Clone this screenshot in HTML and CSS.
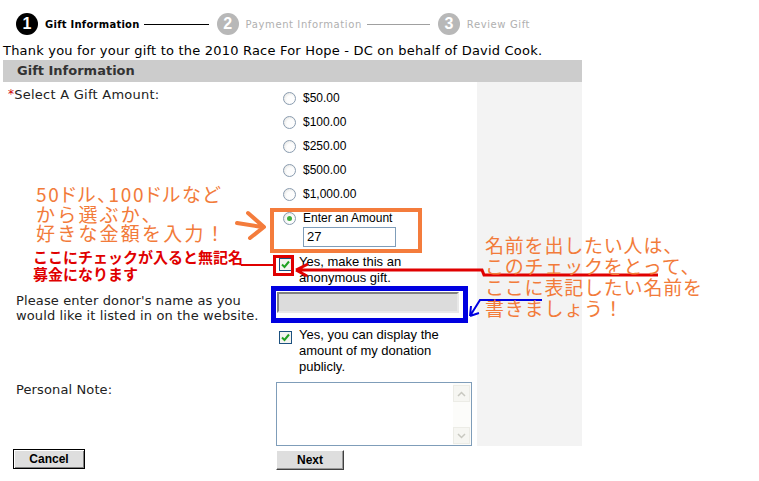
FILE: index.html
```html
<!DOCTYPE html>
<html lang="ja">
<head>
  <meta charset="UTF-8" />
  <title>Gift Information</title>
  <link rel="stylesheet" href="styles.css">
</head>
<body>
<div class="page">
  <div class="steps">
    <span class="step-num active">1</span>
    <span class="step-label active">Gift Information</span>
    <span class="step-line active"></span>
    <span class="step-num">2</span>
    <span class="step-label">Payment Information</span>
    <span class="step-line"></span>
    <span class="step-num">3</span>
    <span class="step-label">Review Gift</span>
  </div>

  <p class="intro">Thank you for your gift to the 2010 Race For Hope - DC on behalf of David Cook.</p>
  <div class="section-head">Gift Information</div>

  <div class="form">
    <div class="label row1"><span class="req">*</span>Select A Gift Amount:</div>
    <div class="field row1 amounts">
      <div class="radio-row"><span class="radio"></span>$50.00</div>
      <div class="radio-row"><span class="radio"></span>$100.00</div>
      <div class="radio-row"><span class="radio"></span>$250.00</div>
      <div class="radio-row"><span class="radio"></span>$500.00</div>
      <div class="radio-row"><span class="radio"></span>$1,000.00</div>
      <div class="radio-row"><span class="radio checked"></span>Enter an Amount</div>
      <div class="text-input amount-input">27</div>
    </div>
    <div class="side-panel"></div>

    <div class="label row2"></div>
    <div class="field row2 check-row">
      <span class="check"><svg width="9" height="9" viewBox="0 0 9 9"><path d="M1 4.5 L3.5 7 L8 1.5" fill="none" stroke="#21a121" stroke-width="2"/></svg></span>
      <span class="check-text">Yes, make this an anonymous gift.</span>
    </div>

    <div class="label row3">Please enter donor's name as you would like it listed in on the website.</div>
    <div class="field row3"><div class="name-input"></div></div>

    <div class="label row4"></div>
    <div class="field row4 check-row">
      <span class="check"><svg width="9" height="9" viewBox="0 0 9 9"><path d="M1 4.5 L3.5 7 L8 1.5" fill="none" stroke="#21a121" stroke-width="2"/></svg></span>
      <span class="check-text">Yes, you can display the amount of my donation publicly.</span>
    </div>

    <div class="label row5">Personal Note:</div>
    <div class="field row5">
      <div class="note">
        <div class="scrollbar">
          <span class="scroll-btn"><svg width="9" height="6" viewBox="0 0 9 6"><path d="M1 5 L4.5 1.5 L8 5" fill="none" stroke="#c8c8c0" stroke-width="1.5"/></svg></span>
          <span class="scroll-btn"><svg width="9" height="6" viewBox="0 0 9 6"><path d="M1 1 L4.5 4.5 L8 1" fill="none" stroke="#c8c8c0" stroke-width="1.5"/></svg></span>
        </div>
      </div>
    </div>
  </div>

  <div class="actions">
    <div><button class="btn default">Cancel</button></div>
    <div><button class="btn next">Next</button></div>
  </div>

  <!-- annotations drawn over the form -->
  <svg class="marks" width="759" height="481" viewBox="0 0 759 481">
    <rect x="272" y="210" width="148" height="41" fill="none" stroke="#f47c3c" stroke-width="4"/>
    <rect x="274.5" y="256.5" width="18" height="18" fill="none" stroke="#e00000" stroke-width="3"/>
    <rect x="273.5" y="288.5" width="192" height="32" fill="none" stroke="#0000e0" stroke-width="5"/>
    <path d="M237 223 L262 227 M248 213 L264 227 L250 238" fill="none" stroke="#f47c3c" stroke-width="4" stroke-linecap="round" stroke-linejoin="round"/>
    <path d="M241 265 L273 265" stroke="#e00000" stroke-width="2"/>
    <path d="M296 270 L482 270 L484 275 L658 275 M296 270 L308 264 M296 270 L307 276" fill="none" stroke="#e00000" stroke-width="3"/>
    <path d="M542 300 L480 300 L470 316 M470 316 L471 306 M470 316 L479 313" fill="none" stroke="#0000e0" stroke-width="2"/>
  </svg>
  <div class="note-jp left-jp"><span class="tight">50ドル、100ドルなど</span><br>から選ぶか、<br>好きな金額を入力！</div>
  <div class="note-red">ここにチェックが入ると無記名<br>募金になります</div>
  <div class="note-jp right-jp">名前を出したい人は、<br>このチェックをとって、<br>ここに表記したい名前を<br>書きましょう！</div>
</div>
</body>
</html>
```

FILE: styles.css
```css
body {
  margin: 0;
  font-family: "DejaVu Sans", Verdana, sans-serif;
  font-size: 12px;
  color: #000;
  background: #fff;
}
.page {
  position: relative;
  width: 759px;
  height: 481px;
  overflow: hidden;
}
.steps {
  display: flex;
  align-items: center;
  height: 22px;
  padding: 13px 0 0 16px;
}
.step-num {
  width: 22px;
  height: 22px;
  border-radius: 50%;
  background: #b8b8b8;
  color: #fff;
  font-family: "Liberation Sans", Arial, sans-serif;
  font-weight: bold;
  font-size: 16px;
  line-height: 22px;
  text-align: center;
}
.step-num.active { background: #000; }
.step-label {
  margin-left: 7px;
  font-size: 10px;
  letter-spacing: 0.6px;
  color: #b0b0b0;
}
.step-label.active {
  color: #000;
  font-weight: bold;
  letter-spacing: 0.25px;
}
.step-line {
  width: 63px;
  height: 1px;
  margin: 0 8px 0 5px;
  background: #a0a0a0;
}
.step-line.active {
  width: 65px;
  background: #000;
  margin-left: 4px;
}
.intro {
  margin: 8px 0 0 3px;
  font-size: 13px;
  line-height: 16px;
  letter-spacing: 0.2px;
}
.section-head {
  margin: 1px 0 0 3px;
  width: 565px;
  height: 22px;
  padding-left: 14px;
  background: #cccccc;
  color: #333;
  font-weight: bold;
  font-size: 13px;
  line-height: 22px;
}
.form {
  display: grid;
  grid-template-columns: 273px 201px 105px;
  margin-left: 3px;
}
.label {
  grid-column: 1;
  padding-left: 13px;
  font-size: 13px;
  letter-spacing: 0.12px;
  line-height: 15px;
  color: #222;
}
.field {
  grid-column: 2;
  font-family: "Liberation Sans", Arial, sans-serif;
  font-size: 12px;
}
.side-panel {
  grid-column: 3;
  grid-row: 1 / span 5;
  background: #f3f3f3;
}
.row1 { grid-row: 1; }
.row2 { grid-row: 2; }
.row3 { grid-row: 3; }
.row4 { grid-row: 4; }
.row5 { grid-row: 5; }
.label.row1 { padding-left: 5px; padding-top: 5px; letter-spacing: 0.25px; }
.req { color: #d00000; font-size: 12px; vertical-align: top; }
.label.row3 { padding-top: 7px; }
.label.row5 { padding-top: 7px; }
.amounts { padding-top: 4px; }
.radio-row {
  display: flex;
  align-items: center;
  height: 24px;
  padding-left: 7px;
}
.radio {
  box-sizing: border-box;
  width: 13px;
  height: 13px;
  margin-right: 7px;
  border: 1px solid #8a9cb0;
  border-radius: 50%;
  background: radial-gradient(circle at 60% 60%, #fdfdfd 40%, #dcdcd8 100%);
  position: relative;
}
.radio.checked::after {
  content: "";
  position: absolute;
  left: 3px;
  top: 3px;
  width: 5px;
  height: 5px;
  border-radius: 50%;
  background: #3fae3f;
}
.text-input {
  box-sizing: border-box;
  border: 1px solid #7f9db9;
  background: #fff;
  font-size: 13px;
}
.amount-input {
  width: 93px;
  height: 20px;
  margin: -3px 0 0 27px;
  padding-left: 3px;
  line-height: 18px;
}
.check-row {
  display: flex;
  align-items: flex-start;
  font-size: 13px;
  line-height: 16px;
  padding-left: 3px;
}
.row2.check-row { padding-top: 7px; }
.row4.check-row { padding-top: 4px; }
.check {
  box-sizing: border-box;
  flex: none;
  width: 13px;
  height: 13px;
  margin-top: 4px;
  margin-right: 7px;
  border: 1px solid #1c5180;
  background: #f4f4f0;
  display: flex;
  align-items: center;
  justify-content: center;
}
.check-text { width: 150px; }
.row3.field { padding-top: 6px; }
.name-input {
  box-sizing: border-box;
  width: 182px;
  height: 21px;
  margin-left: 1px;
  background: #dcdcdc;
  border: 2px solid;
  border-color: #808080 #e8e8e8 #e8e8e8 #808080;
}
.row5.field { padding-top: 7px; }
.note {
  box-sizing: border-box;
  width: 196px;
  height: 64px;
  border: 1px solid #7f9db9;
  background: #fff;
  display: flex;
  justify-content: flex-end;
}
.scrollbar {
  width: 17px;
  display: flex;
  flex-direction: column;
  justify-content: space-between;
  padding: 2px 1px 1px 0;
  background: #fcfcfa;
}
.scroll-btn {
  height: 15px;
  border: 1px solid #ecece6;
  background: #f6f6f2;
  display: flex;
  align-items: center;
  justify-content: center;
}
.actions {
  display: grid;
  grid-template-columns: 273px 201px;
  margin-left: 3px;
}
.btn {
  box-sizing: border-box;
  height: 20px;
  padding: 0;
  background: #dedede;
  border: 1px solid;
  border-color: #fff #404040 #404040 #fff;
  box-shadow: inset -1px -1px #9a9a9a;
  font-family: "Liberation Sans", Arial, sans-serif;
  font-weight: bold;
  font-size: 12px;
  color: #000;
}
.btn.default {
  width: 72px;
  margin: 3px 0 0 10px;
  border: 1px solid #000;
  box-shadow: inset 1px 1px #fff, inset -1px -1px #808080;
}
.btn.next {
  width: 68px;
  margin-top: 4px;
}
.marks {
  position: absolute;
  left: 0;
  top: 0;
}
.note-jp {
  position: absolute;
  font-family: "Noto Sans CJK JP", sans-serif;
  color: #f27b3a;
  white-space: nowrap;
}
.left-jp {
  left: 36px;
  top: 184px;
  font-size: 19px;
  line-height: 19.5px;
  letter-spacing: 2.2px;
}
.left-jp .tight {
  font-feature-settings: "palt";
  letter-spacing: 1.8px;
}
.right-jp {
  left: 485px;
  top: 234px;
  font-size: 19px;
  line-height: 21px;
  letter-spacing: 0.8px;
}
.note-red {
  position: absolute;
  left: 33px;
  top: 248px;
  font-family: "Noto Sans CJK JP", sans-serif;
  font-weight: bold;
  font-size: 15px;
  line-height: 17px;
  color: #e00000;
  white-space: nowrap;
}
```
